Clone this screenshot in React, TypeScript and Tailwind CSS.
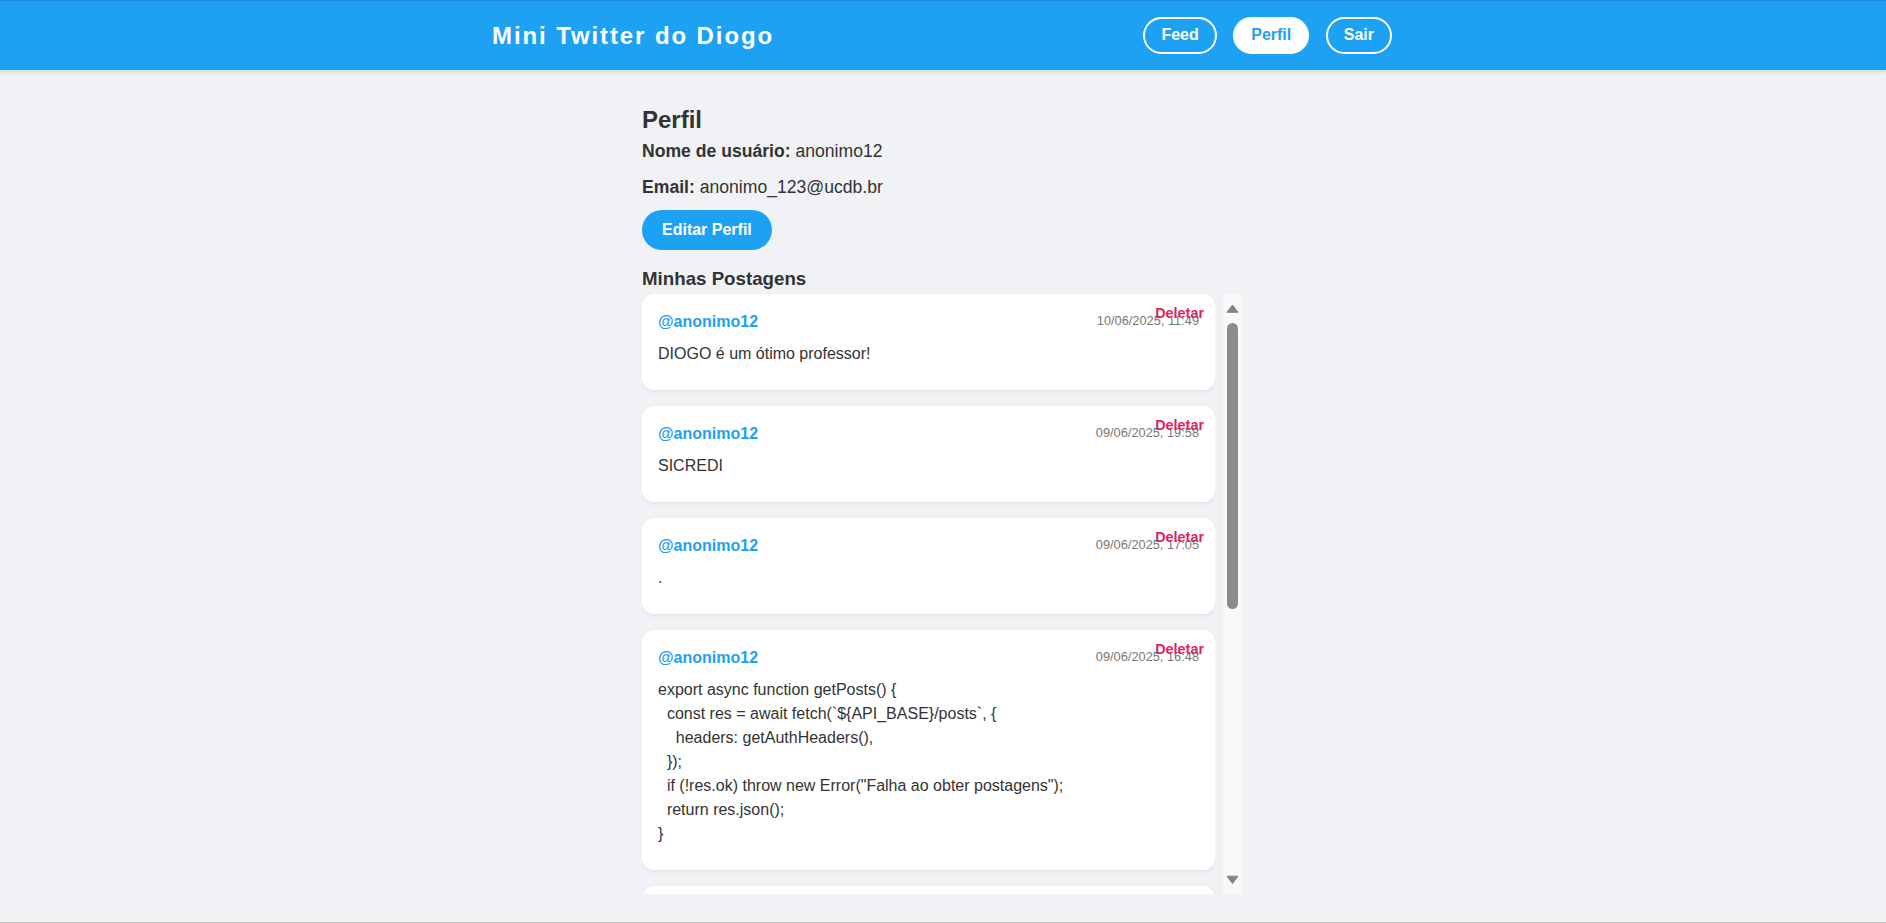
import React from "react";

type Post = { id: number; date: string; content: string };

const posts: Post[] = [
  { id: 1, date: "10/06/2025, 11:49", content: "DIOGO é um ótimo professor!" },
  { id: 2, date: "09/06/2025, 19:58", content: "SICREDI" },
  { id: 3, date: "09/06/2025, 17:05", content: "." },
  {
    id: 4,
    date: "09/06/2025, 16:48",
    content:
      'export async function getPosts() {\n  const res = await fetch(`${API_BASE}/posts`, {\n    headers: getAuthHeaders(),\n  });\n  if (!res.ok) throw new Error("Falha ao obter postagens");\n  return res.json();\n}',
  },
  { id: 5, date: "09/06/2025, 16:30", content: "Olá, mundo!" },
];

function PostCard({ post }: { post: Post }) {
  return (
    <div className="relative shrink-0 rounded-[12px] bg-white px-4 pt-[19px] pb-[23.5px] shadow-[0_1px_5px_rgba(0,0,0,0.08)]">
      <div className="flex items-start justify-between">
        <span className="text-[16px] leading-[18px] font-bold text-[#1da1f2]">@anonimo12</span>
        <span className="text-[12.8px] leading-[15px] text-[#777777]">{post.date}</span>
      </div>
      <p className="mt-[11px] whitespace-pre-wrap text-[16px] leading-[24px] text-[#333333]">{post.content}</p>
      <button className="absolute top-[11px] right-[11px] text-[14.4px] leading-[16.5px] font-bold text-[#e0245e]">
        Deletar
      </button>
    </div>
  );
}

function FakeScrollbar() {
  return (
    <div className="flex h-[600px] w-[19px] shrink-0 flex-col items-center bg-[#f9f9f9]">
      <svg className="mt-[10px] shrink-0" width="13" height="9" viewBox="0 0 13 9">
        <path d="M6.5 1 L12 8.3 L1 8.3 Z" fill="#848484" stroke="#848484" strokeWidth="1" strokeLinejoin="round" />
      </svg>
      <div className="mt-[9.5px] h-[286px] w-[11px] shrink-0 rounded-full bg-[#8c8c8c]" />
      <div className="flex-1" />
      <svg className="mb-[9px] shrink-0" width="13" height="10" viewBox="0 0 13 10">
        <path d="M1 1.2 L12 1.2 L6.5 8.6 Z" fill="#848484" stroke="#848484" strokeWidth="1" strokeLinejoin="round" />
      </svg>
    </div>
  );
}

export default function App() {
  return (
    <div className="flex h-[923px] flex-col overflow-hidden border-b border-[#c2c2c2] bg-[#f0f2f5] font-['Liberation_Sans',Arial,sans-serif]">
      <header className="relative z-10 h-[70px] shrink-0 border-t border-[#1a8fd9] bg-[#1da1f2] shadow-[0_2px_4px_rgba(0,0,0,0.12)]">
        <div className="mx-auto flex h-full max-w-[902px] items-center justify-between pr-[2px]">
          <h1 className="text-[24px] font-bold tracking-[1.9px] text-white">Mini Twitter do Diogo</h1>
          <nav className="flex items-center gap-[16.5px]">
            <button className="rounded-full border-2 border-white px-[16px] py-[7.5px] text-[16px] leading-[18.4px] font-bold text-white">
              Feed
            </button>
            <button className="rounded-full border-2 border-white bg-white px-[16px] py-[7.5px] text-[16px] leading-[18.4px] font-bold text-[#1da1f2]">
              Perfil
            </button>
            <button className="rounded-full border-2 border-white px-[16px] py-[7.5px] text-[16px] leading-[18.4px] font-bold text-white">
              Sair
            </button>
          </nav>
        </div>
      </header>

      <main className="mx-auto w-full max-w-[602px] flex-1 pt-[36px] pr-[2px] text-[#333333]">
        <h2 className="text-[24px] leading-[28px] font-bold">Perfil</h2>
        <p className="mt-[7px] text-[17.6px] leading-[20px]">
          <strong className="font-bold">Nome de usuário:</strong> anonimo12
        </p>
        <p className="mt-[16px] text-[17.6px] leading-[20px]">
          <strong className="font-bold">Email:</strong> anonimo_123@ucdb.br
        </p>
        <button className="mt-[13px] h-[40px] rounded-full bg-[#1da1f2] px-5 text-[16px] font-bold text-white">
          Editar Perfil
        </button>
        <h3 className="mt-[17.5px] text-[18.72px] leading-[22px] font-bold">Minhas Postagens</h3>

        <div className="mt-[4.5px] flex h-[600px] gap-[8px]">
          <div className="flex h-[600px] flex-1 flex-col gap-[16.5px] overflow-hidden">
            {posts.map((p) => (
              <PostCard key={p.id} post={p} />
            ))}
          </div>
          <FakeScrollbar />
        </div>
      </main>
    </div>
  );
}
